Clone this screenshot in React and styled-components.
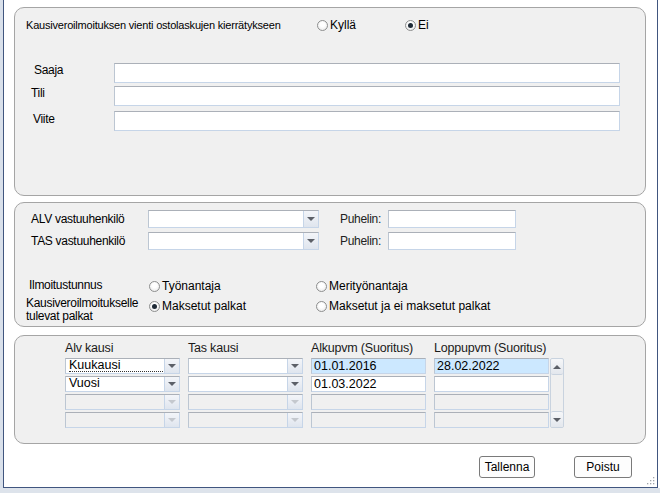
import React from "react";
import styled, { createGlobalStyle, css } from "styled-components";

const GlobalStyle = createGlobalStyle`
  body {
    margin: 0;
    background: #dde3eb;
    font-family: "Liberation Sans", Arial, sans-serif;
    color: #000;
  }
`;

const Screen = styled.div`
  width: 660px;
  height: 493px;
  overflow: hidden;
  display: flex;
  flex-direction: column;
`;

const Desk = styled.div`
  display: flex;
  height: 488px;
`;

const Edge = styled.div`
  width: 3px;
  background: #d9e0ea;
`;

const Side = styled.div`
  flex: 1;
  background: #fff;
`;

const Window = styled.div`
  width: 655px;
  box-sizing: border-box;
  background: #fff;
  border: 1px solid #41567f;
  border-top: none;
  padding: 7px 10px 0 10px;
  display: flex;
  flex-direction: column;
  position: relative;
`;

const Panel = styled.div`
  box-sizing: border-box;
  width: 632px;
  height: ${p => p.h}px;
  margin-top: ${p => p.gap || 0}px;
  background: #f0f0f0;
  border: 1px solid #a5a5a5;
  border-radius: 10px;
  font-size: 11px;
  letter-spacing: -0.2px;
`;

/* ---------- generic controls ---------- */

const boxBorder = css`
  box-sizing: border-box;
  border: 1px solid;
  border-color: #abb0b8 #c6d5e8 #c6d5e8 #bcc6d2;
`;

const TextBox = styled.div`
  ${boxBorder};
  width: ${p => p.w}px;
  height: ${p => p.h || 20}px;
  background: ${p => (p.selected ? "#cce8ff" : p.disabled ? "#f0f0f0" : "#fff")};
  font-size: 12.5px;
  letter-spacing: 0;
  line-height: ${p => (p.h || 20) - 2}px;
  padding-left: 2px;
  white-space: nowrap;
`;

const Combo = styled.div`
  ${boxBorder};
  width: ${p => p.w}px;
  height: ${p => p.h}px;
  display: flex;
  background: ${p => (p.disabled ? "#f0f0f0" : "#fff")};
  font-size: 12.5px;
  letter-spacing: 0;
`;

const ComboText = styled.div`
  flex: 1;
  padding-left: 3px;
  line-height: ${p => p.h - 3}px;
  white-space: nowrap;
`;

const Focus = styled.span`
  display: inline-block;
  width: 94px;
  border-bottom: 1px dotted #333;
  line-height: 12px;
`;

const DropButton = styled.div`
  width: 14px;
  border-left: 1px solid #c6d5e8;
  background: linear-gradient(#f3f5f9, #dfe5ee);
  display: flex;
  align-items: center;
  justify-content: center;
  &::after {
    content: "";
    border-left: 4px solid transparent;
    border-right: 4px solid transparent;
    border-top: 4px solid ${p => (p.disabled ? "#c4c8ce" : "#5c6068")};
  }
`;

const RadioItem = styled.label`
  display: flex;
  align-items: center;
  gap: 2px;
  width: ${p => (p.w ? `${p.w}px` : "auto")};
  white-space: nowrap;
  font-size: ${p => p.fs || 11}px;
  letter-spacing: ${p => (p.fs ? 0 : -0.2)}px;
`;

const Dot = styled.span`
  box-sizing: border-box;
  width: 11px;
  height: 11px;
  border-radius: 50%;
  border: 1px solid #8e8f8f;
  background: radial-gradient(circle at 50% 40%, #fff 30%, #e4e4e4 100%);
  display: flex;
  align-items: center;
  justify-content: center;
  &::after {
    content: "";
    width: 5px;
    height: 5px;
    border-radius: 50%;
    background: ${p => (p.checked ? "#1e2a36" : "transparent")};
  }
`;

const Radio = ({ label, checked, w, fs }) => (
  <RadioItem w={w} fs={fs}>
    <Dot checked={checked} />
    {label}
  </RadioItem>
);

/* ---------- panel 1 ---------- */

const HeadRow = styled.div`
  display: flex;
  align-items: center;
  padding: 10px 0 0 11px;
`;

const Title = styled.div`
  width: 291px;
`;

const FieldGrid = styled.div`
  display: grid;
  grid-template-columns: 88px 506px;
  margin: 31px 0 0 11px;
`;

const FieldLabel = styled.div`
  padding-left: ${p => p.indent}px;
  margin-top: ${p => p.top || 0}px;
  font-size: 12px;
  letter-spacing: -0.3px;
`;

const FieldCell = styled.div`
  margin-bottom: ${p => p.mb || 0}px;
`;

/* ---------- panel 2 ---------- */

const PersonGrid = styled.div`
  display: grid;
  grid-template-columns: 117px 192px 48px 128px;
  row-gap: 4px;
  padding: 7px 0 0 16px;
  align-items: center;
`;

const PersonLabel = styled.div`
  font-size: 12px;
  letter-spacing: -0.3px;
`;

const PhoneLabel = styled.div`
  font-size: 12px;
  letter-spacing: -0.3px;
  color: #222;
`;

const ChoiceGrid = styled.div`
  display: grid;
  grid-template-columns: 123px 167px auto;
  padding: 29px 0 0 11px;
  row-gap: 4px;
`;

const ChoiceLabel = styled.div`
  padding-left: ${p => p.indent || 0}px;
  font-size: 12px;
  letter-spacing: -0.3px;
  line-height: 13px;
`;

const ChoiceCell = styled.div`
  padding-top: ${p => p.top || 0}px;
`;

/* ---------- panel 3 ---------- */

const PeriodWrap = styled.div`
  display: flex;
  align-items: flex-end;
  padding: 4px 0 0 50px;
`;

const PeriodGrid = styled.div`
  display: grid;
  grid-template-columns: repeat(4, 115px);
  column-gap: 8px;
  row-gap: 2px;
`;

const ColHead = styled.div`
  font-size: 12.5px;
  line-height: 16px;
  color: #1a1a1a;
  white-space: nowrap;
`;

const ScrollBar = styled.div`
  box-sizing: border-box;
  width: 14px;
  height: 70px;
  margin-left: 1px;
  display: flex;
  flex-direction: column;
  justify-content: space-between;
  border: 1px solid #c9d3df;
  border-radius: 2px;
  background: #f0f0f0;
`;

const ScrollBtn = styled.div`
  height: 15px;
  border-radius: 2px;
  background: linear-gradient(#f6f7f9, #e3e7ed);
  border-bottom: ${p => (p.up ? "1px solid #c9d3df" : "none")};
  border-top: ${p => (p.up ? "none" : "1px solid #c9d3df")};
  display: flex;
  align-items: center;
  justify-content: center;
  &::after {
    content: "";
    border-left: 4px solid transparent;
    border-right: 4px solid transparent;
    ${p =>
      p.up
        ? "border-bottom: 4px solid #5c6068;"
        : "border-top: 4px solid #5c6068;"}
  }
`;

/* ---------- footer ---------- */

const Footer = styled.div`
  display: flex;
  justify-content: flex-end;
  gap: 39px;
  padding: 12px 14px 0 0;
  width: 632px;
  box-sizing: border-box;
`;

const Button = styled.button`
  box-sizing: border-box;
  width: ${p => p.w}px;
  height: 22px;
  border: 1px solid #7a7a7a;
  border-radius: 3px;
  background: #fdfdfd;
  font-family: "Liberation Sans", Arial, sans-serif;
  font-size: 12px;
  color: #000;
  padding: 0;
`;

const Grip = styled.svg`
  position: absolute;
  right: 2px;
  bottom: 2px;
`;

const comboRows = [
  { alv: "Kuukausi", focus: true, start: "01.01.2016", end: "28.02.2022", sel: true },
  { alv: "Vuosi", start: "01.03.2022", end: "" },
  { disabled: true },
  { disabled: true }
];

export default function App() {
  return (
    <Screen>
      <GlobalStyle />
      <Desk>
        <Edge />
        <Window>
          <Panel h={189}>
            <HeadRow>
              <Title>Kausiveroilmoituksen vienti ostolaskujen kierrätykseen</Title>
              <Radio label="Kyllä" w={88} fs={12} />
              <Radio label="Ei" checked fs={12} />
            </HeadRow>
            <FieldGrid>
              <FieldLabel indent={8} top={0}>Saaja</FieldLabel>
              <FieldCell mb={3}><TextBox w={506} /></FieldCell>
              <FieldLabel indent={5} top={0}>Tili</FieldLabel>
              <FieldCell mb={5}><TextBox w={506} /></FieldCell>
              <FieldLabel indent={7} top={1}>Viite</FieldLabel>
              <FieldCell><TextBox w={506} /></FieldCell>
            </FieldGrid>
          </Panel>

          <Panel h={125} gap={6}>
            <PersonGrid>
              <PersonLabel>ALV vastuuhenkilö</PersonLabel>
              <Combo w={171} h={18}><ComboText h={18} /><DropButton /></Combo>
              <PhoneLabel>Puhelin:</PhoneLabel>
              <TextBox w={128} h={18} />
              <PersonLabel>TAS vastuuhenkilö</PersonLabel>
              <Combo w={171} h={18}><ComboText h={18} /><DropButton /></Combo>
              <PhoneLabel>Puhelin:</PhoneLabel>
              <TextBox w={128} h={18} />
            </PersonGrid>
            <ChoiceGrid>
              <ChoiceLabel indent={3}>Ilmoitustunnus</ChoiceLabel>
              <ChoiceCell><Radio label="Työnantaja" fs={12} /></ChoiceCell>
              <ChoiceCell><Radio label="Merityönantaja" fs={12} /></ChoiceCell>
              <ChoiceLabel>
                Kausiveroilmoitukselle
                <br />
                tulevat palkat
              </ChoiceLabel>
              <ChoiceCell top={2}><Radio label="Maksetut palkat" checked fs={12} /></ChoiceCell>
              <ChoiceCell top={2}><Radio label="Maksetut ja ei maksetut palkat" fs={12} /></ChoiceCell>
            </ChoiceGrid>
          </Panel>

          <Panel h={109} gap={8}>
            <PeriodWrap>
              <PeriodGrid>
                <ColHead>Alv kausi</ColHead>
                <ColHead>Tas kausi</ColHead>
                <ColHead>Alkupvm (Suoritus)</ColHead>
                <ColHead>Loppupvm (Suoritus)</ColHead>
                {comboRows.map((r, i) => (
                  <React.Fragment key={i}>
                    <Combo w={115} h={16} disabled={r.disabled}>
                      <ComboText h={16}>{r.focus ? <Focus>{r.alv}</Focus> : r.alv}</ComboText>
                      <DropButton disabled={r.disabled} />
                    </Combo>
                    <Combo w={115} h={16} disabled={r.disabled}>
                      <ComboText h={16} />
                      <DropButton disabled={r.disabled} />
                    </Combo>
                    <TextBox w={115} h={16} selected={r.sel} disabled={r.disabled}>{r.start}</TextBox>
                    <TextBox w={115} h={16} selected={r.sel} disabled={r.disabled}>{r.end}</TextBox>
                  </React.Fragment>
                ))}
              </PeriodGrid>
              <ScrollBar>
                <ScrollBtn up />
                <ScrollBtn />
              </ScrollBar>
            </PeriodWrap>
          </Panel>

          <Footer>
            <Button w={56}>Tallenna</Button>
            <Button w={58}>Poistu</Button>
          </Footer>

          <Grip width="10" height="10" viewBox="0 0 10 10">
            {[[8, 2], [8, 5], [5, 5], [8, 8], [5, 8], [2, 8]].map(([x, y], i) => (
              <rect key={i} x={x} y={y} width="1.3" height="1.3" fill="#a0a4aa" />
            ))}
          </Grip>
        </Window>
        <Side />
      </Desk>
    </Screen>
  );
}
